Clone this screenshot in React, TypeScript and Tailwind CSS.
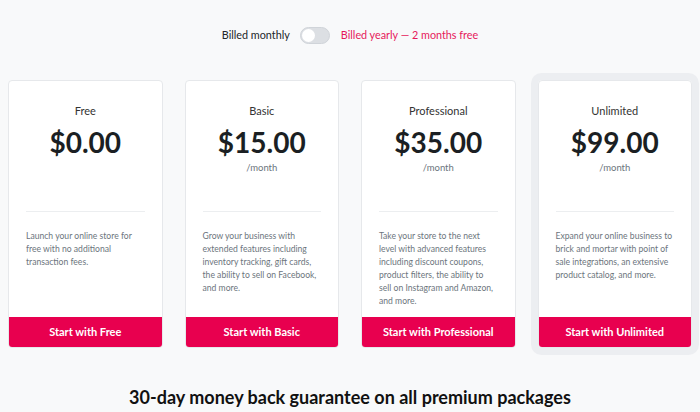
import React from "react";

const plans = [
  { name: "Free", price: "$0.00", month: false, desc: "Launch your online store for free with no additional transaction fees.", btn: "Start with Free" },
  { name: "Basic", price: "$15.00", month: true, desc: "Grow your business with extended features including inventory tracking, gift cards, the ability to sell on Facebook, and more.", btn: "Start with Basic" },
  { name: "Professional", price: "$35.00", month: true, desc: "Take your store to the next level with advanced features including discount coupons, product filters, the ability to sell on Instagram and Amazon, and more.", btn: "Start with Professional" },
  { name: "Unlimited", price: "$99.00", month: true, desc: "Expand your online business to brick and mortar with point of sale integrations, an extensive product catalog, and more.", btn: "Start with Unlimited", highlight: true },
];

export default function App() {
  return (
    <div className="w-[700px] h-[412px] overflow-hidden bg-[#f8f9fa] text-[#212529]" style={{ fontFamily: 'Lato, "Noto Sans", sans-serif' }}>
      <div className="flex items-center justify-center h-[70px]">
        <span className="text-[10.8px] text-[#212529] mr-[10px]">Billed monthly</span>
        <div className="w-[30px] h-[17px] rounded-full bg-[#dcdfe3] border border-[#d0d4d9] relative mr-[11px]">
          <div className="absolute left-[1px] top-[1px] w-[13px] h-[13px] rounded-full bg-white"></div>
        </div>
        <span className="text-[10.8px] text-[#e6185a]">Billed yearly — 2 months free</span>
      </div>
      <div className="grid grid-cols-4 gap-[22px] px-[8px] mt-[10px]">
        {plans.map((p) => (
          <div key={p.name} className={p.highlight ? "rounded-[4px] ring-[7px] ring-[#eceef1]" : ""}>
            <div className="h-[268px] flex flex-col bg-white border border-[#e6e8eb] rounded-[4px] overflow-hidden">
              <div className="h-[130px] flex flex-col items-center pt-[21px]">
                <div className="text-[11px] leading-[18px] text-[#333]">{p.name}</div>
                <div className="text-[28px] leading-[34px] font-bold mt-[5px] text-[#1b1f23]">{p.price}</div>
                {p.month && <div className="text-[9.5px] leading-[14px] text-[#6c757d] mt-[2px]">/month</div>}
              </div>
              <div className="mx-[17px] h-px bg-[#eceef0]"></div>
              <div className="px-[17px] mt-[18px] text-[8.6px] leading-[13px] text-[#6c757d]">{p.desc}</div>
              <div className="mt-auto h-[30px] bg-[#e8004f] flex items-center justify-center text-white text-[11px] font-bold">{p.btn}</div>
            </div>
          </div>
        ))}
      </div>
      <div className="text-center mt-[36px] text-[18px] font-bold text-[#111] leading-[26px]">
        30-day money back guarantee on all premium packages
      </div>
    </div>
  );
}
